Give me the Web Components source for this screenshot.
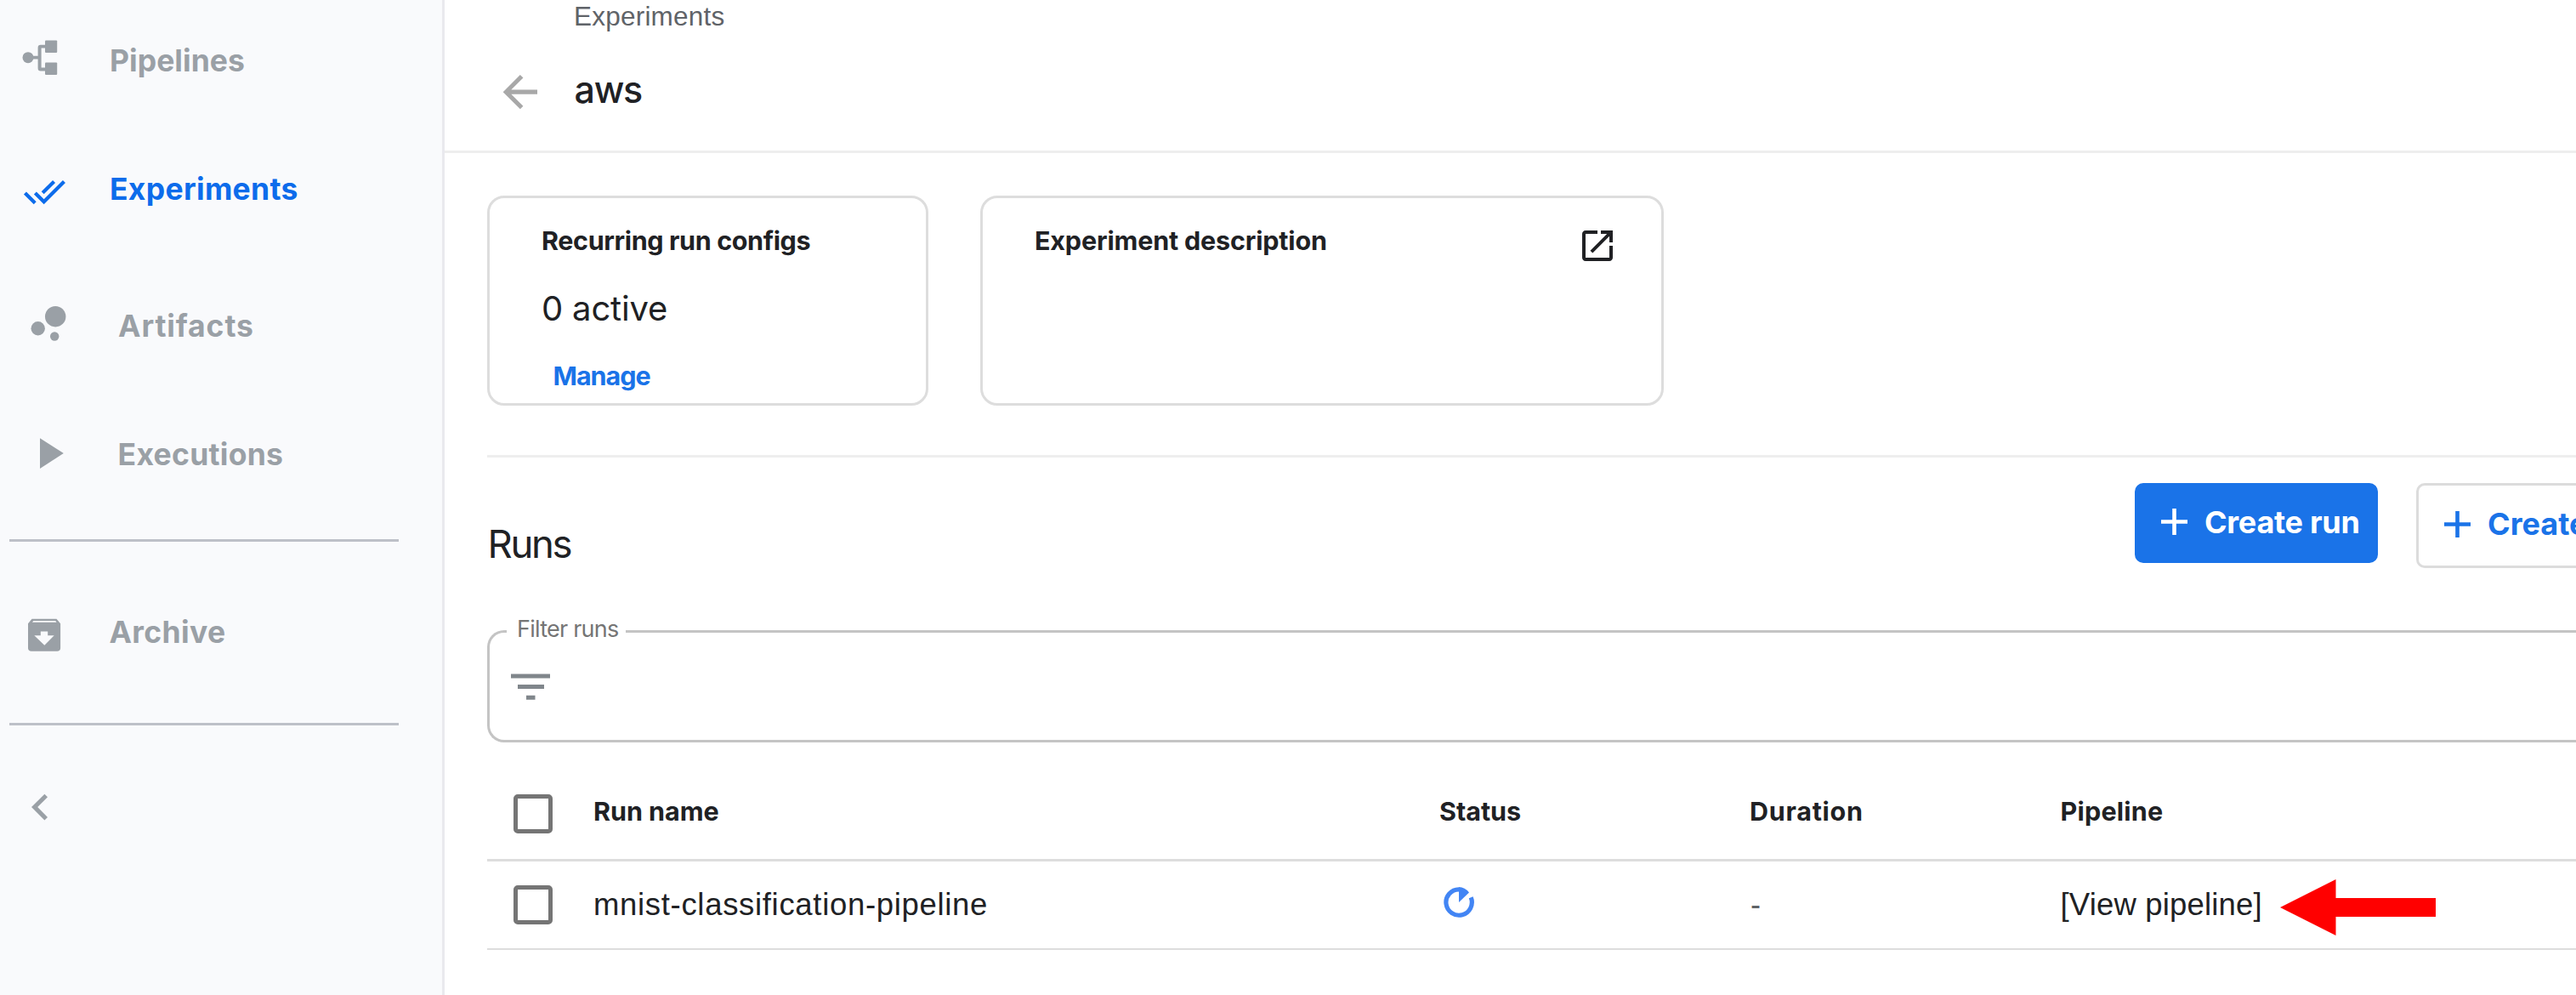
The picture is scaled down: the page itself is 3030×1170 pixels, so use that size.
<!DOCTYPE html>
<html lang="en">
<head>
<meta charset="utf-8">
<title>Experiments - aws</title>
<style>
html,body{margin:0;height:100%;overflow:hidden;background:#fff}
body{font-family:Inter,"Liberation Sans",sans-serif;color:#202124}
</style>
</head>
<body>
<kfp-app></kfp-app>
<script>
const ctx = document.createElement('canvas').getContext('2d');
const define = (name, html, ready) => customElements.define(name, class extends HTMLElement {
  connectedCallback() {
    if (this.shadowRoot) return;
    const root = this.attachShadow({mode: 'open'});
    const t = document.createElement('template');
    t.innerHTML = typeof html === 'function' ? html(this) : html;
    root.append(t.content.cloneNode(true));
    if (ready) ready(this, root);
  }
});

// Text label tracked so that its ink spans exactly `w` pixels
define('fit-text', el => {
  const size = +el.getAttribute('size'), w = +el.getAttribute('w');
  const weight = el.getAttribute('weight') || 700;
  const family = el.hasAttribute('plain') ? '"Liberation Sans", Arial, sans-serif' : 'Inter, "Liberation Sans", sans-serif';
  const text = el.textContent;
  ctx.font = `${weight} ${size}px ${family}`;
  const m = ctx.measureText(text);
  const ink = m.actualBoundingBoxLeft + m.actualBoundingBoxRight;
  const ls = text.length > 1 ? (w - ink) / (text.length - 1) : 0;
  return `<style>
    :host{display:block;flex:none;width:${w}px;line-height:${el.getAttribute('lh') || 40}px;white-space:nowrap;
      font-family:${family};font-size:${size}px;font-weight:${weight};letter-spacing:${ls.toFixed(3)}px}
    span{margin-left:${m.actualBoundingBoxLeft.toFixed(2)}px}
  </style><span><slot></slot></span>`;
});

define('nav-item', `<style>
  :host{display:flex;align-items:center;flex:none;color:#9aa0a6}
  :host([active]){color:#0d6ceb}
  ::slotted(svg){flex:none;width:100px;height:100px;fill:currentColor}
</style><slot></slot>`);

define('nav-divider', `<style>:host{display:block;flex:none;height:3px;width:458px;margin-left:11px;background:#bdc0c8}</style>`);

define('side-nav', `<style>
  :host{display:flex;flex-direction:column;flex:none;width:520px;background:#f9fafc;border-right:3px solid #e9e9ee}
  fit-text{margin-left:31px}
  .wide{margin-left:39px}
  .drop{padding-top:3px}
</style>
<nav-item style="height:140px">
  <svg viewBox="0 20 100 100"><circle cx="33" cy="67.7" r="6.5"/><path d="M38 65.8h6.6V56q0-3.2 3.2-3.2H54v3.8h-5.4v23H54v3.8h-6.2q-3.2 0-3.2-3.2V69.6H38z"/><rect x="53" y="47.5" width="14.2" height="14.5" rx="1"/><rect x="53" y="73.5" width="14.2" height="14.6" rx="1"/></svg>
  <fit-text class="drop" w="156" size="35.5">Pipelines</fit-text>
</nav-item>
<nav-item active style="height:165px">
  <svg viewBox="0 172.6 100 100"><path transform="translate(27.1 199.8) scale(2.107)" d="M18 7l-1.41-1.41-6.34 6.34 1.41 1.41L18 7zm4.24-1.41L11.66 16.17 7.48 12l-1.41 1.41L11.66 19l12-12-1.42-1.41zM.41 13.41L6 19l1.41-1.41L1.83 12 .41 13.41z"/></svg>
  <fit-text w="218.5" size="35.5">Experiments</fit-text>
</nav-item>
<nav-item style="height:154px">
  <svg viewBox="0 332.2 100 100"><circle cx="65.2" cy="372.4" r="12.2"/><circle cx="44.7" cy="386.5" r="8.2"/><circle cx="64.2" cy="395.7" r="5.2"/></svg>
  <fit-text class="wide drop" w="158" size="35.5">Artifacts</fit-text>
</nav-item>
<nav-item style="height:151px">
  <svg viewBox="0 484.5 100 100"><path d="M47 514.7v35.7l27.8-17.8z"/></svg>
  <fit-text style="margin-left:40.6px" w="191.5" size="35.5">Executions</fit-text>
</nav-item>
<nav-divider style="margin-top:24px"></nav-divider>
<nav-item style="height:213px">
  <svg viewBox="0 693.2 100 100"><path fill-rule="evenodd" d="M37.5 727h29l4.6 5.500v28.500q0 4-4 4H37q-4 0-4-4v-28.500zM38 731h28.500l-1.200-1.900h-26zM47.800 741.800v4.700h-7.500l12 11.500 11.400-11.500h-7.500v-4.700z"/></svg>
  <fit-text style="margin-left:28.500px" w="135.500" size="35.5">Archive</fit-text>
</nav-item>
<nav-divider></nav-divider>
<nav-item style="height:192px">
  <svg viewBox="0 899 100 100"><path d="M52.400 933.700L37 949.100l15.400 15.400 3.600-3.600L44.200 949.100 56 937.300z"/></svg>
</nav-item>`);

define('page-header', `<style>
  :host{display:block;box-sizing:border-box;height:180px;border-bottom:3px solid #eee;padding-top:1px}
  .crumb{margin-left:154px;color:#5f6368}
  .title{display:flex;align-items:center;height:136px}
  svg{width:100px;height:100px;margin-left:37px;fill:#a8a8a8}
  .name{margin-left:16.500px}
</style>
<fit-text class="crumb" plain weight="400" size="31.5" w="174.500" lh="36">Experiments</fit-text>
<div class="title">
  <svg viewBox="560 55.300 100 100"><path transform="translate(581.600 78.200) scale(2.520)" d="M20 11H7.83l5.590-5.590L12 4l-8 8 8 8 1.410-1.410L7.830 13H20v-2z"/></svg>
  <fit-text class="name" weight="500" size="43" w="78.500">aws</fit-text>
</div>`);

define('info-card', `<style>
  :host{display:flex;box-sizing:border-box;flex:none;height:247px;border:3px solid #ddd;border-radius:20px;padding:29.500px 0 0 63px}
</style><slot></slot>`);

define('action-button', `<style>
  :host{display:flex;align-items:center;box-sizing:border-box;flex:none;border-radius:10px;color:#1a73e8}
  :host([primary]){background:#1a73e8;color:#fff}
  :host(:not([primary])){border:3px solid #dcdcdc}
  svg{flex:none;width:31px;height:31px;fill:currentColor;margin-right:21px}
</style><svg viewBox="0 0 31 31"><path d="M13.200 0h4.600v13.200H31v4.600H17.800V31h-4.600V17.800H0v-4.600h13.200z"/></svg><slot></slot>`);

define('filter-box', `<style>
  :host{display:block;position:relative;box-sizing:border-box;height:132px;border:3px solid #c4c4c4;border-right:0;border-radius:20px 0 0 20px;padding:47.500px 0 0 25px}
  .label{position:absolute;left:20px;top:-24.500px;width:106px;padding-left:14px;padding-right:20px;background:#fff;color:#757575}
  svg{display:block;width:46px;height:32px;fill:#80868b}
</style>
<div class="label"><fit-text weight="400" size="27" w="117">Filter runs</fit-text></div>
<svg viewBox="0 0 46 32"><path d="M0 .5h46v5H0zM8 13h31v5H8zM18 25.700h10.500v5H18z"/></svg>`);

define('check-box', `<style>:host{display:block;box-sizing:border-box;width:46px;height:46px;margin-left:31px;border:5px solid #757575;border-radius:5px}</style>`);

define('run-row', `<style>
  :host{display:grid;box-sizing:border-box;grid-template-columns:127px 994px 366px 365.500px 1fr;align-items:center;height:104px;border-bottom:2px solid #ddd}
  :host([head]){height:140px;padding-top:31px;border-bottom-width:3px}
  :host([head]) ::slotted(fit-text){margin-top:-7px}
</style><slot></slot>`);

define('run-page', `<style>
  :host{display:block;margin-left:50px}
  .cards{display:flex;gap:61px;padding:50px 0 58px}
  .col{display:flex;flex-direction:column}
  .open{width:36px;height:36px;margin:8.500px 0 0 300.500px;fill:#202124}
  .bar{display:flex;align-items:flex-start;box-sizing:border-box;height:206px;border-top:3px solid #eee}
  .gray{color:#5f6368}
  .status{width:36px;height:36px;margin:-6px 0 0 3.500px}
  .cell{display:flex;align-items:center}
  .arrow{width:183px;height:66px;margin:6px 0 0 23px;fill:#f00}
</style>
<div class="cards">
  <info-card style="width:519px"><div class="col">
    <fit-text size="30.500" w="313.500">Recurring run configs</fit-text>
    <fit-text style="margin-top:35.700px" weight="400" size="40" lh="50" w="145">0 active</fit-text>
    <fit-text style="margin:34.300px 0 0 13.500px;color:#1a73e8" size="30.500" w="113">Manage</fit-text>
  </div></info-card>
  <info-card style="width:804px">
    <fit-text size="30.500" w="341">Experiment description</fit-text>
    <svg class="open" viewBox="3 3 18 18"><path d="M19 19H5V5h7V3H5c-1.110 0-2 .9-2 2v14c0 1.100.890 2 2 2h14c1.100 0 2-.9 2-2v-7h-2v7zM14 3v2h3.590l-9.830 9.830 1.410 1.410L19 6.410V10h2V3h-7z"/></svg>
  </info-card>
</div>
<div class="bar">
  <fit-text style="margin:72px 0 0 3.500px" weight="400" size="45.500" lh="60" w="95">Runs</fit-text>
  <action-button primary style="width:286px;height:94px;margin:30px 0 0 1839.500px;padding:0 0 3px 31px"><fit-text size="36" w="180.500">Create run</fit-text></action-button>
  <action-button style="width:286px;height:99.500px;margin:30px 0 0 45px;padding:0 0 3px 30px"><fit-text size="36" w="116">Create</fit-text></action-button>
</div>
<filter-box></filter-box>
<run-row head>
  <check-box></check-box>
  <fit-text size="30.500" w="145.500">Run name</fit-text>
  <fit-text size="30.500" w="94">Status</fit-text>
  <fit-text size="30.500" w="130">Duration</fit-text>
  <fit-text size="30.500" w="118.500">Pipeline</fit-text>
</run-row>
<run-row>
  <check-box></check-box>
  <fit-text plain weight="400" size="36.500" w="460">mnist-classification-pipeline</fit-text>
  <svg class="status" viewBox="0 0 36 36"><path fill="none" stroke="#4285f4" stroke-width="5.200" d="M18 2.800A15.200 15.200 0 1 0 32.200 12.300"/><path fill="#4285f4" d="M18 0Q25 0 30 6.500L18 18z"/></svg>
  <fit-text class="gray" plain weight="400" size="36" w="10.500">-</fit-text>
  <div class="cell">
    <fit-text plain weight="400" size="36.500" w="233">[View pipeline]</fit-text>
    <svg class="arrow" viewBox="0 0 183 66"><path d="M0 33L65.500 0v22H183v22H65.500v22z"/></svg>
  </div>
</run-row>`);

define('kfp-app', `<style>
  :host{display:flex;height:1170px;width:3030px;overflow:hidden}
  main{flex:1;min-width:0;overflow:hidden;background:#fff}
</style>
<side-nav></side-nav>
<main><page-header></page-header><run-page></run-page></main>`);
</script>
</body>
</html>
